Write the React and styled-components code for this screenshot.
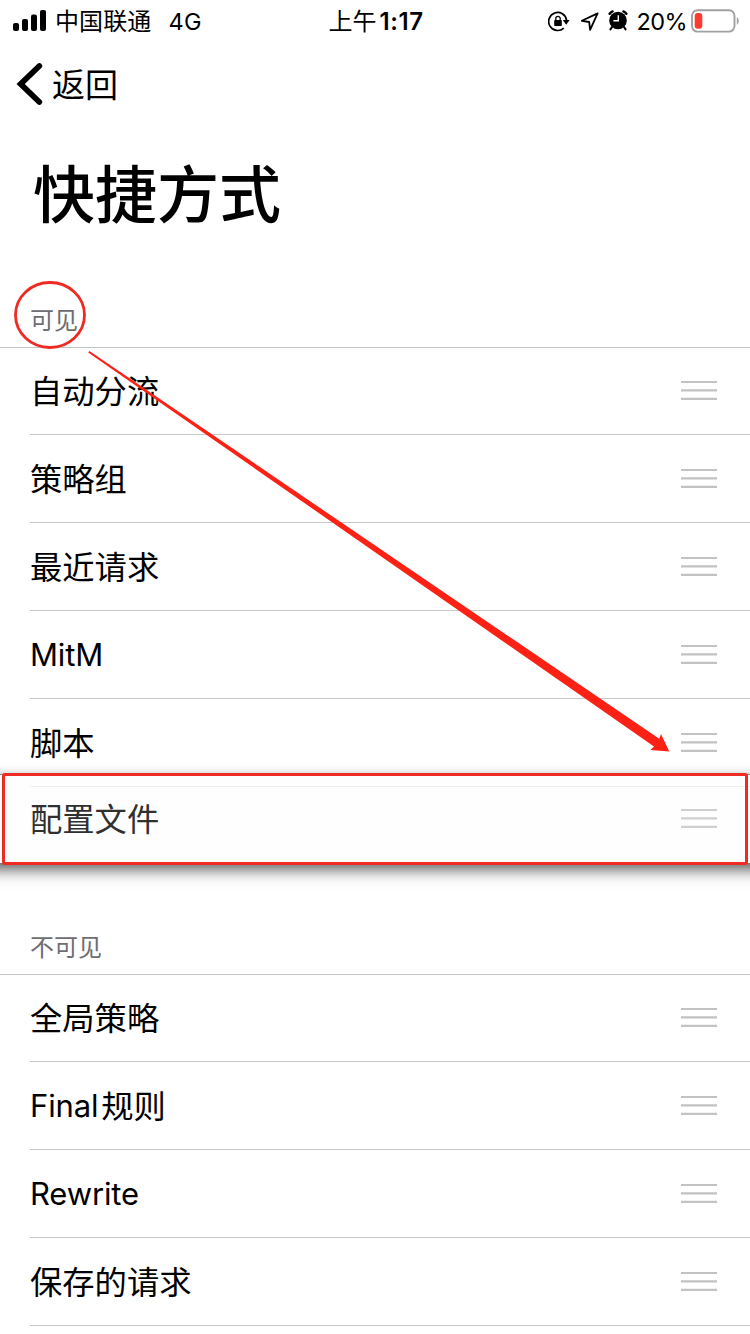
import React from 'react';
import styled, { createGlobalStyle } from 'styled-components';

const GlobalStyle = createGlobalStyle`
  * { box-sizing: border-box; }
  body {
    margin: 0;
    background: #fff;
    color: #000;
    font-family: Inter, "Noto Sans CJK SC", sans-serif;
  }
`;

const Screen = styled.main`
  position: relative;
  width: 750px;
  height: 1334px;
  overflow: hidden;
  background: #fff;
`;

const StatusBar = styled.header`
  display: grid;
  grid-template-columns: 1fr auto 1fr;
  align-items: center;
  height: 40px;
  padding: 0 11px 0 13px;
  font-size: 24px;
  line-height: 40px;
  white-space: nowrap;
`;

const StatusGroup = styled.div`
  display: flex;
  align-items: center;
  height: 40px;
  justify-content: ${({ $end }) => ($end ? 'flex-end' : 'flex-start')};
`;

const Carrier = styled.span`
  margin-left: 9px;
  padding-top: 2px;
  font-size: 24px;
  letter-spacing: 0.1px;
`;

const Network = styled.span`
  margin-left: 17px;
  padding-top: 2px;
  font-size: 23.5px;
  letter-spacing: 0.3px;
`;

const Clock = styled.div`
  display: flex;
  gap: 3px;
  padding-top: 2px;
`;

const Digits = styled.span`
  font-weight: 600;
  font-size: 24px;
  letter-spacing: 0.6px;
`;

const Percent = styled.span`
  margin: 0 4px 0 9px;
  padding-top: 2px;
  font-size: 23.5px;
  letter-spacing: -0.6px;
`;

const Icon = styled.svg`
  display: block;
  flex: none;
  margin-left: ${({ $gap = 0 }) => $gap}px;
`;

const NavBar = styled.nav`
  display: flex;
  align-items: center;
  height: 88px;
  padding-left: 16px;
`;

const BackLabel = styled.span`
  margin-left: 9px;
  padding-top: 2px;
  font-size: 33px;
  line-height: 48px;
`;

const Title = styled.h1`
  height: 128px;
  margin: 0;
  padding: 23px 0 0 33px;
  font-size: 62px;
  line-height: 90px;
  font-weight: 500;
`;

const SectionHeader = styled.h2`
  display: flex;
  align-items: flex-end;
  height: ${({ $height }) => $height}px;
  margin: 0;
  padding: 0 30px 8px;
  border-bottom: 1px solid #c4c4c6;
  color: #6d6d72;
  font-size: 24px;
  font-weight: 400;
  line-height: 36px;
`;

const List = styled.ul`
  margin: 0;
  padding: 0;
  list-style: none;
`;

const Row = styled.li`
  display: flex;
  align-items: center;
  justify-content: space-between;
  height: 88px;
  margin-left: 30px;
  padding-right: 33px;
  border-bottom: 1px solid #c8c7cc;

  &:first-child {
    height: 87px;
    padding-bottom: 1px;
  }
`;

const RowLabel = styled.span`
  display: flex;
  align-items: center;
  gap: 3px;
  font-size: 32.3px;
  line-height: 48px;
  white-space: nowrap;
`;

const LatinText = styled.span`
  padding-top: 1px;
  font-size: 31px;
  letter-spacing: -0.15px;
`;

const ChineseText = styled.span`
  padding-top: 3px;
`;

const LiftedRow = styled.li`
  position: relative;
  top: -13px;
  z-index: 1;
  display: flex;
  align-items: center;
  justify-content: space-between;
  height: 89px;
  margin: 0 -20px -1px;
  padding: 0 53px 1px 50px;
  background: #fefefe;
  border-top: 1px solid #8a8a8a;
  color: #303030;
  box-shadow: 0 8px 14px 0 rgba(0, 0, 0, 0.5), 0 2px 10px rgba(0, 0, 0, 0.25);

  &::before {
    content: '';
    position: absolute;
    top: 11px;
    left: 50px;
    right: 0;
    height: 1px;
    background: #f0f0f0;
  }
`;

const Frame = styled.div`
  position: absolute;
  z-index: 2;
  top: 773px;
  left: 2px;
  width: 746px;
  height: 92px;
  border: 3px solid #ee2a22;
  border-radius: 3px;
`;

const Annotation = styled.svg`
  position: absolute;
  z-index: 3;
  inset: 0;
  pointer-events: none;
`;

const Handle = ({ color = '#c2c2c5' }) => (
  <Icon width="36" height="21" viewBox="0 0 36 21">
    <path d="M0 2h36M0 10.4h36M0 18.8h36" stroke={color} strokeWidth="2.2" />
  </Icon>
);

const Item = ({ latin, text }) => (
  <Row>
    <RowLabel>
      {latin && <LatinText>{latin}</LatinText>}
      {text && <ChineseText>{text}</ChineseText>}
    </RowLabel>
    <Handle />
  </Row>
);

const visible = [{ text: '自动分流' }, { text: '策略组' }, { text: '最近请求' }, { latin: 'MitM' }, { text: '脚本' }];
const hidden = [{ text: '全局策略' }, { latin: 'Final', text: '规则' }, { latin: 'Rewrite' }, { text: '保存的请求' }];

export default function App() {
  return (
    <>
      <GlobalStyle />
      <Screen>
        <StatusBar>
          <StatusGroup>
            <Icon width="33" height="22" viewBox="0 0 33 22">
              <rect x="0" y="13" width="6" height="8" rx="2" />
              <rect x="9" y="9" width="6" height="12" rx="2" />
              <rect x="18" y="4.5" width="6" height="16.5" rx="2" />
              <rect x="27" y="0" width="6" height="21" rx="2" />
            </Icon>
            <Carrier>中国联通</Carrier>
            <Network>4G</Network>
          </StatusGroup>
          <Clock>
            <span>上午</span>
            <Digits>1:17</Digits>
          </Clock>
          <StatusGroup $end>
            <Icon width="22" height="22" viewBox="0 0 22 22">
              <path d="M15.8 18.1A9 9 0 1 1 18.6 10.3" fill="none" stroke="#000" strokeWidth="1.7" />
              <path d="M14.8 10.1h6.8l-3.4 4.6z" />
              <rect x="6.2" y="10" width="7.6" height="6" rx="0.8" />
              <path d="M7.8 10.4V8.5a2.2 2.2 0 0 1 4.4 0v2" fill="none" stroke="#000" strokeWidth="1.3" />
            </Icon>
            <Icon $gap={10} width="20" height="20" viewBox="0 0 20 20">
              <path d="M17.6 2.4L1.8 9.8l7.4 1.2.9 7.8z" fill="none" stroke="#000" strokeWidth="1.8" strokeLinejoin="round" />
            </Icon>
            <Icon $gap={8} width="20" height="22" viewBox="0 0 20 22">
              <circle cx="10" cy="10.5" r="8.8" />
              <path d="M1.6 3.8A8 8 0 0 1 4.6 1.4M15.4 1.4a8 8 0 0 1 3 2.4" fill="none" stroke="#000" strokeWidth="2.4" strokeLinecap="round" />
              <path d="M4 17l-1.6 2.4M16 17l1.6 2.4" stroke="#000" strokeWidth="2" strokeLinecap="round" />
              <path d="M10.3 5.3v5.4H5.4" fill="none" stroke="#fff" strokeWidth="1.4" />
            </Icon>
            <Percent>20%</Percent>
            <Icon width="48" height="24" viewBox="0 0 48 24">
              <rect x="1" y="1.2" width="42.5" height="21.4" rx="5.5" fill="none" stroke="#a1a1a1" strokeWidth="1.9" />
              <rect x="3.7" y="4" width="7.6" height="15.8" rx="3" fill="#ff3b30" />
              <path d="M45.8 8v8q2-1.2 2-4t-2-4z" fill="#a1a1a1" />
            </Icon>
          </StatusGroup>
        </StatusBar>

        <NavBar>
          <Icon width="27" height="44" viewBox="0 0 27 44">
            <path d="M23.3 4L4.7 22l18.6 18" fill="none" stroke="#000" strokeWidth="5.8" strokeLinecap="round" />
          </Icon>
          <BackLabel>返回</BackLabel>
        </NavBar>

        <Title>快捷方式</Title>

        <SectionHeader $height={92}>可见</SectionHeader>
        <List>
          {visible.map((item) => (
            <Item key={item.latin || item.text} {...item} />
          ))}
          <LiftedRow>
            <RowLabel>
              <ChineseText>配置文件</ChineseText>
            </RowLabel>
            <Handle color="#cfcfd2" />
          </LiftedRow>
        </List>

        <SectionHeader $height={100}>不可见</SectionHeader>
        <List>
          {hidden.map((item) => (
            <Item key={item.latin || item.text} {...item} />
          ))}
        </List>

        <Frame />
        <Annotation width="750" height="1334" viewBox="0 0 750 1334">
          <ellipse cx="50" cy="315" rx="34.5" ry="32.5" fill="none" stroke="#ee2a22" strokeWidth="2.8" />
          <path d="M88.2 352.4L89.4 351L659.3 738.8L661 734L669.3 751.5L650.3 750L654 746.5Z" fill="#fb2215" />
        </Annotation>
      </Screen>
    </>
  );
}
